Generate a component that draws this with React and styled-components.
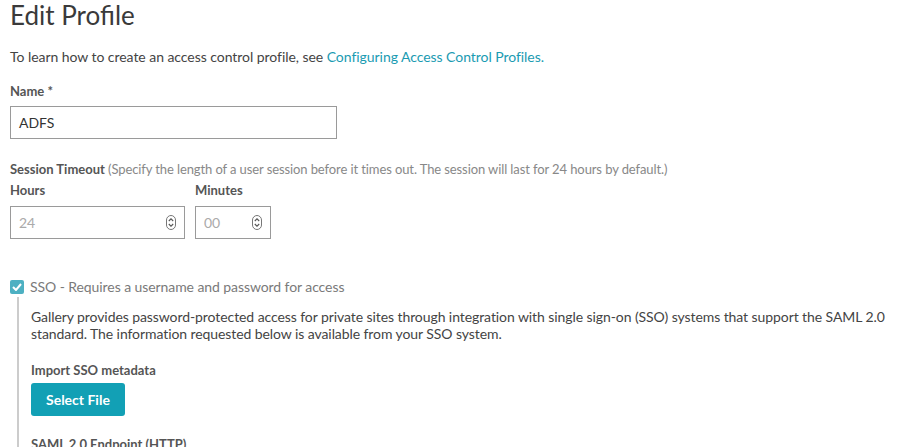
import React from 'react';
import styled, { createGlobalStyle } from 'styled-components';

const GlobalStyle = createGlobalStyle`
  body {
    margin: 0;
    background: #fff;
    font-family: Lato, "Open Sans", sans-serif;
    color: #333;
  }
`;

const Page = styled.div`
  padding: 0 6px 0 10px;
`;

const Title = styled.h1`
  margin: 0;
  font-size: 26px;
  font-weight: 400;
  line-height: 30px;
  color: #3a3a3a;
`;

const Intro = styled.p`
  margin: 18px 0 0;
  font-size: 14px;
  line-height: 17px;
  letter-spacing: -0.05px;
  color: #444;

  a {
    color: #1a9bb2;
    text-decoration: none;
  }
`;

const Label = styled.div`
  margin-top: ${(p) => p.$top || 0}px;
  font-size: 13px;
  font-weight: 700;
  line-height: 16px;
  color: #555;

  span {
    font-weight: 400;
    color: #888;
    letter-spacing: -0.1px;
  }
`;

const TextInput = styled.div`
  box-sizing: border-box;
  margin-top: ${(p) => p.$gap ?? 8}px;
  width: ${(p) => p.$width}px;
  height: 33px;
  border: 1px solid #9a9a9a;
  padding: 0 8px;
  display: flex;
  align-items: center;
  justify-content: space-between;
  font-size: 14px;
  color: ${(p) => (p.$muted ? '#aaa' : '#333')};
`;

const TimeRow = styled.div`
  display: flex;
  gap: 10px;
  margin-top: 5px;
`;

const TimeField = styled.div`
  display: flex;
  flex-direction: column;
`;

const Check = styled.label`
  display: flex;
  align-items: center;
  gap: 6px;
  margin-top: 39px;
  font-size: 14px;
  line-height: 17px;
  letter-spacing: -0.08px;
  color: #7a7a7a;
`;

const Box = styled.span`
  width: 14px;
  height: 14px;
  border-radius: 2px;
  background: #4db0c2;
  display: flex;
  align-items: center;
  justify-content: center;
`;

const Nested = styled.div`
  margin-left: 7px;
  margin-top: 2px;
  border-left: 2px solid #ccc;
  padding: 11px 0 0 12px;
`;

const Para = styled.p`
  margin: 0;
  font-size: 14px;
  line-height: 17px;
  letter-spacing: -0.08px;
  color: #444;
`;

const Button = styled.button`
  margin-top: 5px;
  height: 33px;
  padding: 0 15px;
  border: none;
  border-radius: 3px;
  background: #12a0b5;
  color: #fff;
  font-family: inherit;
  font-size: 14px;
  font-weight: 700;
`;

const Spinner = () => (
  <svg width="10" height="15" viewBox="0 0 10 15">
    <rect x="0.5" y="0.5" width="9" height="14" rx="4.5" fill="none" stroke="#777" />
    <path d="M2.8 6 L5 3.8 L7.2 6 M2.8 9 L5 11.2 L7.2 9" fill="none" stroke="#555" strokeWidth="1.1" />
  </svg>
);

export default function App() {
  return (
    <Page>
      <GlobalStyle />
      <Title>Edit Profile</Title>
      <Intro>
        To learn how to create an access control profile, see{' '}
        <a href="#">Configuring Access Control Profiles.</a>
      </Intro>
      <Label $top={18}>Name *</Label>
      <TextInput $width={327} $gap={7}>ADFS</TextInput>
      <Label $top={22}>
        Session Timeout <span>(Specify the length of a user session before it times out. The session will last for 24 hours by default.)</span>
      </Label>
      <TimeRow>
        <TimeField>
          <Label>Hours</Label>
          <TextInput $width={175} $muted>24<Spinner /></TextInput>
        </TimeField>
        <TimeField>
          <Label>Minutes</Label>
          <TextInput $width={76} $muted>00<Spinner /></TextInput>
        </TimeField>
      </TimeRow>
      <Check>
        <Box>
          <svg width="10" height="8" viewBox="0 0 10 8">
            <path d="M1 4 L4 7 L9 1" fill="none" stroke="#fff" strokeWidth="2" />
          </svg>
        </Box>
        SSO - Requires a username and password for access
      </Check>
      <Nested>
        <Para>
          Gallery provides password-protected access for private sites through integration with single sign-on (SSO) systems that support the SAML 2.0 standard. The information requested below is available from your SSO system.
        </Para>
        <Label $top={20}>Import SSO metadata</Label>
        <Button>Select File</Button>
        <Label $top={20}>SAML 2.0 Endpoint (HTTP)</Label>
        <TextInput $width={327} />
      </Nested>
    </Page>
  );
}
